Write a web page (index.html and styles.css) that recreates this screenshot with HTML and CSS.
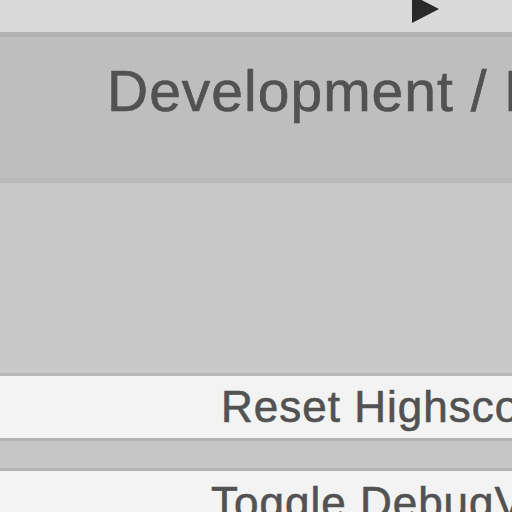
FILE: index.html
```html
<!DOCTYPE html>
<html>
<head>
<meta charset="utf-8">
<link rel="stylesheet" href="styles.css">
</head>
<body>
<div class="screen">
  <div class="topbar">
    <svg class="cursor" width="30" height="30" viewBox="0 0 30 30"><polygon points="1,0 28,14 1,28" fill="#2a2a2a"/></svg>
  </div>
  <div class="header"><span class="title">Development / Debug</span></div>
  <div class="panel"></div>
  <div class="btn"><span class="btn-label label1">Reset Highscore</span></div>
  <div class="gap"></div>
  <div class="btn"><span class="btn-label label2">Toggle DebugView</span></div>
</div>
</body>
</html>
```
FILE: styles.css
```css
html, body {
  margin: 0;
  padding: 0;
  width: 512px;
  height: 512px;
  overflow: hidden;
  background: #c8c8c8;
}
.screen {
  display: flex;
  flex-direction: column;
  width: 512px;
  height: 512px;
  overflow: hidden;
  font-family: "Liberation Sans", Arial, sans-serif;
  color: #525252;
}
.topbar {
  position: relative;
  height: 32px;
  flex: none;
  background: #d9dad9;
  border-bottom: 5px solid #b2b2b2;
}
.cursor {
  position: absolute;
  left: 411px;
  top: -5px;
}
.header {
  height: 141px;
  flex: none;
  background: #bebebe;
  border-bottom: 5px solid #b9b9b9;
  display: flex;
  align-items: center;
  padding-left: 107px;
  white-space: nowrap;
}
.title {
  font-size: 57px;
  line-height: 1;
  letter-spacing: 1px;
  margin-top: -33px;
  -webkit-text-stroke: 0.6px #525252;
}
.panel {
  height: 190px;
  flex: none;
  background: #c8c8c8;
  border-bottom: 3px solid #b8b8b8;
}
.btn {
  height: 62px;
  flex: none;
  background: #f3f3f3;
  border-bottom: 3px solid #b3b3b3;
  display: flex;
  align-items: center;
  white-space: nowrap;
}
.btn-label {
  font-size: 44px;
  line-height: 1;
  letter-spacing: 1px;
  -webkit-text-stroke: 0.6px #525252;
}
.label1 { padding-left: 221px; }
.label2 { padding-left: 211px; margin-top: 2px; }
.gap {
  height: 27px;
  flex: none;
  background: #c6c6c6;
  border-bottom: 3px solid #b3b3b3;
}
```
